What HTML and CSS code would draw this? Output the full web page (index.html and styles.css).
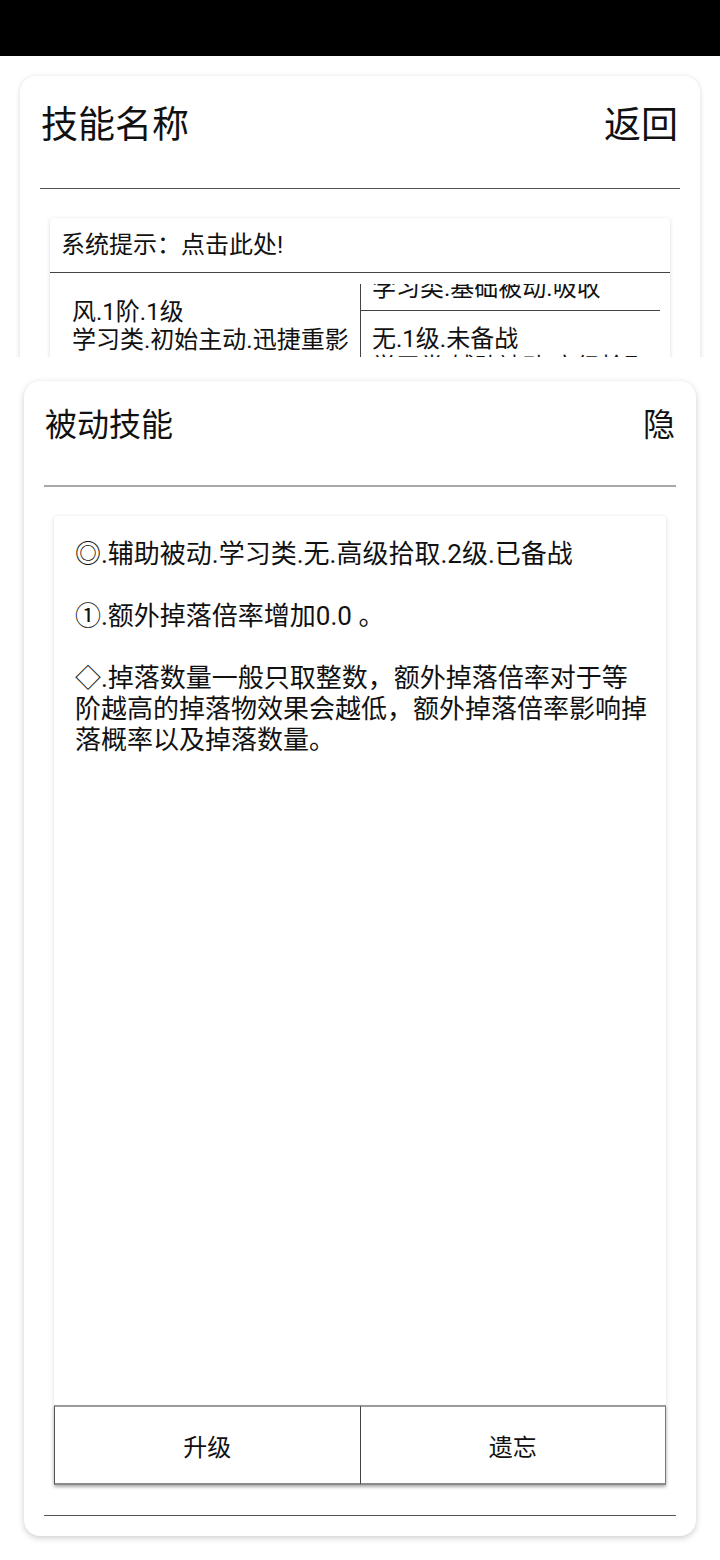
FILE: index.html
```html
<!DOCTYPE html>
<html lang="zh-CN">
<head>
<meta charset="utf-8">
<title>技能</title>
<link rel="stylesheet" href="styles.css">
</head>
<body>
<div class="statusbar"></div>

<div class="top-wrap">
  <section class="card card-top">
    <header class="card-head head-lg">
      <span>技能名称</span>
      <span>返回</span>
    </header>
    <div class="rule rule-dark"></div>
    <div class="panel panel-top">
      <div class="hint">系统提示：点击此处!</div>
      <div class="table-row">
        <div class="cell-left">
          <div>风.1阶.1级</div>
          <div>学习类.初始主动.迅捷重影</div>
        </div>
        <div class="cell-right">
          <div class="list">
            <div class="item">
              <div>无.1级.未备战</div>
              <div>学习类.基础被动.吸收</div>
            </div>
            <div class="item">
              <div>无.1级.未备战</div>
              <div>学习类.辅助被动.高级拾取</div>
            </div>
          </div>
        </div>
      </div>
    </div>
  </section>
</div>

<div class="bottom-wrap">
  <section class="card card-bottom">
    <header class="card-head head-md">
      <span>被动技能</span>
      <span>隐</span>
    </header>
    <div class="rule rule-light"></div>
    <div class="panel panel-main">
      <div class="desc">
        <p>◎.辅助被动.学习类.无.高级拾取.2级.已备战</p>
        <p>①.额外掉落倍率增加0.0 。</p>
        <p>◇.掉落数量一般只取整数，额外掉落倍率对于等阶越高的掉落物效果会越低，额外掉落倍率影响掉落概率以及掉落数量。</p>
      </div>
      <div class="buttons">
        <div class="btn btn-left">升级</div>
        <div class="btn btn-right">遗忘</div>
      </div>
    </div>
    <div class="rule rule-dark rule-foot"></div>
  </section>
</div>
</body>
</html>
```

FILE: styles.css
```css
* { box-sizing: border-box; }

html, body {
  margin: 0;
  padding: 0;
  background: #ffffff;
  width: 720px;
  height: 1560px;
  overflow: hidden;
  font-family: Roboto, "Noto Sans CJK SC", sans-serif;
  color: #111;
}

.statusbar {
  height: 56px;
  background: #000;
}

.top-wrap {
  height: 301px;
  overflow: hidden;
  padding: 20px 20px 0;
}

.card {
  background: #fff;
  border-radius: 16px;
  box-shadow: 0 1px 5px rgba(0, 0, 0, 0.16);
}

.card-top {
  height: 420px;
}

.card-head {
  display: flex;
  justify-content: space-between;
  align-items: flex-start;
}

.head-lg {
  height: 112px;
  padding: 28px 22px 0 21px;
  font-size: 37px;
  line-height: 44px;
}

.head-md {
  height: 104px;
  padding: 26px 21px 0 21px;
  font-size: 32px;
  line-height: 36px;
}

.rule {
  margin: 0 20px;
}

.rule-dark {
  height: 1px;
  background: #555;
}

.rule-light {
  height: 2px;
  background: #a8a8a8;
}

.panel {
  background: #fff;
  border-radius: 4px;
  box-shadow: 0 1px 4px rgba(0, 0, 0, 0.15);
}

.panel-top {
  margin: 29px 30px 0;
  height: 300px;
}

.hint {
  height: 55px;
  padding: 0 11px;
  font-size: 24px;
  line-height: 54px;
  border-bottom: 1px solid #444;
}

.table-row {
  display: flex;
  font-size: 24px;
  line-height: 28px;
}

.cell-left {
  width: 310px;
  padding: 25px 0 0 22px;
  white-space: nowrap;
}

.cell-right {
  flex: 1;
  margin-top: 11px;
  height: 200px;
  border-left: 1px solid #444;
  overflow: hidden;
}

.list {
  margin-top: -52px;
}

.item {
  padding: 14px 0 8px 11px;
  margin-right: 10px;
  border-bottom: 1px solid #444;
  white-space: nowrap;
}

.bottom-wrap {
  padding: 24px 24px 0;
}

.card-bottom {
  height: 1155px;
  display: flex;
  flex-direction: column;
  box-shadow: 0 2px 6px rgba(0, 0, 0, 0.2);
}

.panel-main {
  flex: 1;
  margin: 29px 30px 30px;
  display: flex;
  flex-direction: column;
}

.desc {
  flex: 1;
  padding: 23px 14px 0 21px;
  font-size: 26px;
  line-height: 31px;
}

.desc p {
  margin: 0 0 31px;
}

.buttons {
  display: flex;
  height: 80px;
  box-shadow: 0 2px 3px rgba(0, 0, 0, 0.25);
}

.btn {
  flex: 1;
  display: flex;
  align-items: center;
  justify-content: center;
  font-size: 24px;
  border-top: 2px solid #9c9c9c;
  border-bottom: 2px solid #8a8a8a;
}

.btn-left {
  border-left: 1px solid #555;
  border-right: 1px solid #444;
}

.btn-right {
  border-right: 1px solid #777;
}

.rule-foot {
  flex: none;
  margin-bottom: 20px;
}
```
